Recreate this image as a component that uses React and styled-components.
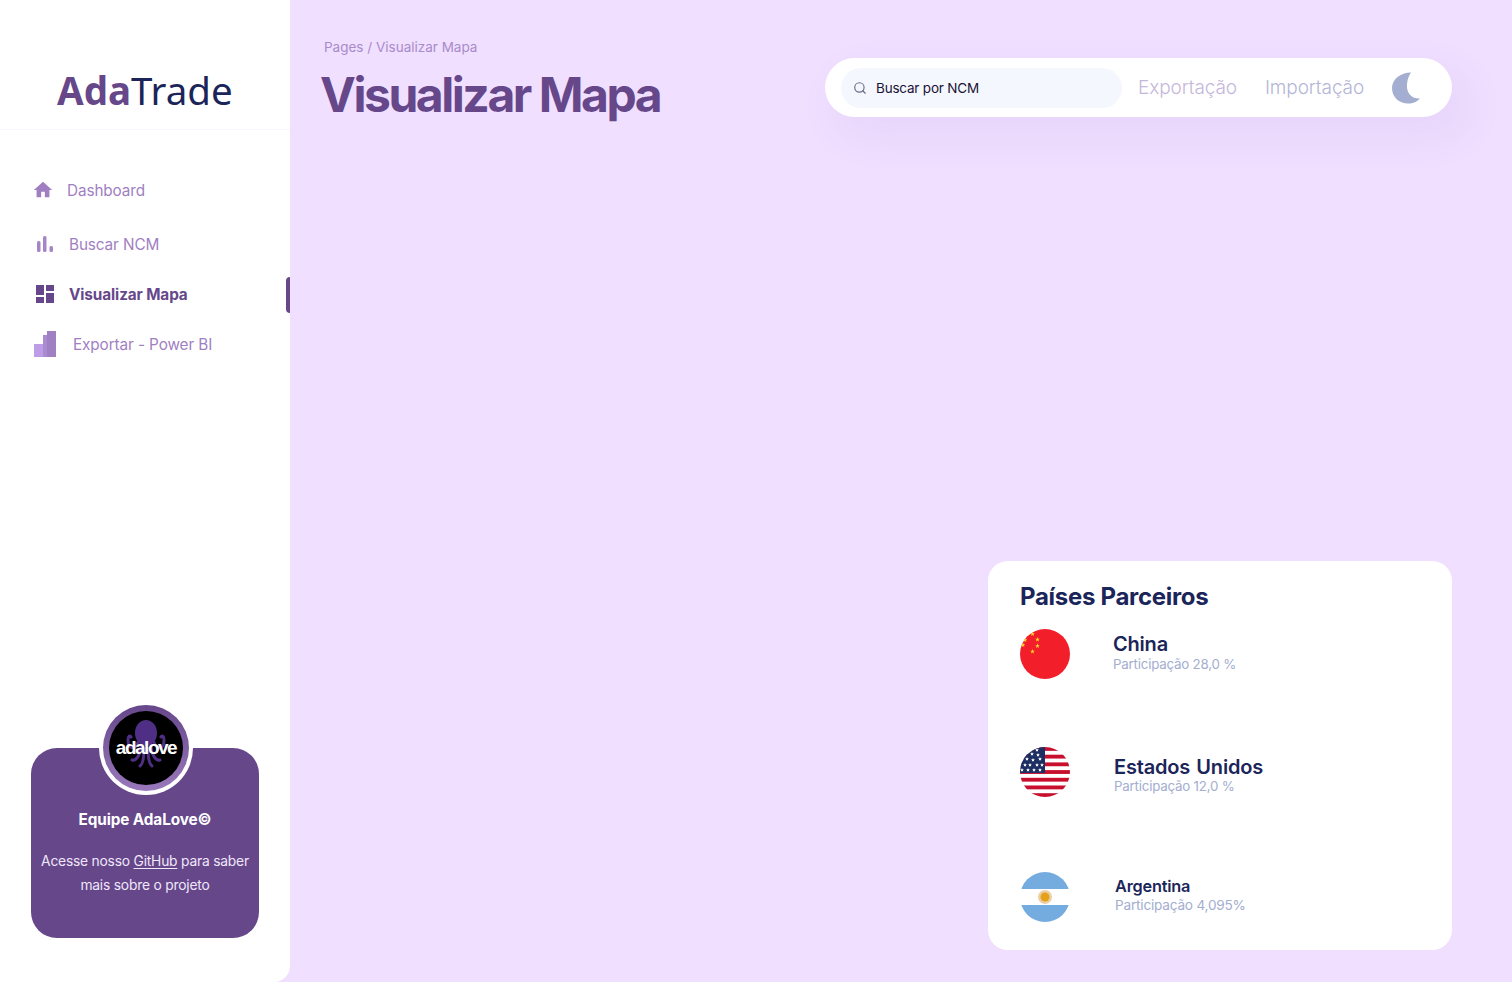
import styled, { createGlobalStyle } from "styled-components"
import { MdHome, MdDashboard } from "react-icons/md"
import { Search } from "lucide-react"

const GlobalStyle = createGlobalStyle`
html, body {
  margin: 0;
  padding: 0;
  height: 100%;
  background: #F0DFFF;
}
* {
  box-sizing: border-box;
}
`

const Page = styled.div`
width: 1512px;
height: 982px;
display: flex;
overflow: hidden;
font-family: Inter, "Liberation Sans", sans-serif;
background: #F0DFFF;
`

const Sidebar = styled.aside`
width: 290px;
height: 100%;
flex-shrink: 0;
background: #fff;
border-bottom-right-radius: 16px;
display: flex;
flex-direction: column;
`
const LogoBox = styled.div`
height: 130px;
flex-shrink: 0;
padding: 63px 0 0 57px;
border-bottom: 1px solid #F4F7FE;
font-family: "Noto Sans", sans-serif;
font-size: 38.5px;
line-height: 54px;
color: #1B2559;
font-weight: 400;
`
const LogoBold = styled.span`
font-weight: 700;
color: #65478A;
`
const Nav = styled.nav`
margin-top: 42px;
display: flex;
flex-direction: column;
gap: 14px;
`
const NavRow = styled.a`
position: relative;
height: 36px;
display: flex;
align-items: center;
gap: ${p => p.$gap}px;
padding-left: ${p => p.$left}px;
margin-bottom: ${p => p.$after || 0}px;
font-size: 15.3px;
letter-spacing: -0.1px;
font-weight: ${p => p.$active ? 700 : 400};
color: ${p => p.$active ? "#65478A" : "#9F7FC2"};
`
const ActiveBar = styled.span`
position: absolute;
right: 0;
top: 1px;
width: 4px;
height: 36px;
border-radius: 4px 0 0 4px;
background: #65478A;
`
const TeamCard = styled.div`
position: relative;
margin: auto 31px 44px;
height: 190px;
border-radius: 26px;
background: #65478A;
padding-top: 62px;
text-align: center;
color: #fff;
`
const Avatar = styled.div`
position: absolute;
left: 68px;
top: -47px;
width: 94px;
height: 94px;
border-radius: 50%;
background: #fff;
display: flex;
align-items: center;
justify-content: center;
`
const AvatarRing = styled.div`
width: 86px;
height: 86px;
border-radius: 50%;
background: linear-gradient(180deg, #65478A 0%, #9A78BC 100%);
display: flex;
align-items: center;
justify-content: center;
`
const AvatarInner = styled.div`
position: relative;
width: 74px;
height: 74px;
border-radius: 50%;
background: #000;
display: flex;
align-items: center;
justify-content: center;
overflow: hidden;
`
const OctopusIcon = styled.svg`
position: absolute;
left: 15px;
top: 9px;
`
const AvatarText = styled.span`
position: relative;
font-family: "Liberation Sans", sans-serif;
font-size: 19px;
font-weight: 700;
letter-spacing: -1.5px;
color: #fff;
margin-top: -1px;
`
const TeamName = styled.div`
font-size: 15.3px;
font-weight: 700;
line-height: 20px;
letter-spacing: -0.1px;
`
const TeamText = styled.p`
margin: 19px 0 0;
font-size: 13.8px;
line-height: 24px;
letter-spacing: -0.2px;
color: #F0E6FA;
`
const TeamLink = styled.span`
text-decoration: underline;
text-underline-offset: 2px;
`

const Main = styled.main`
flex: 1;
display: flex;
flex-direction: column;
padding: 39px 60px 32px 30px;
`
const Header = styled.header`
display: flex;
justify-content: space-between;
align-items: flex-start;
`
const Crumb = styled.div`
padding-left: 4px;
font-size: 13.5px;
line-height: 16px;
color: #A88BC9;
`
const Title = styled.h1`
margin: 8px 0 0;
font-size: 48px;
line-height: 64px;
font-weight: 700;
letter-spacing: -2.45px;
color: #65478A;
`
const TopBar = styled.div`
margin-top: 19px;
width: 627px;
height: 59px;
border-radius: 30px;
background: #fff;
box-shadow: 14px 17px 40px 4px rgba(130, 90, 200, 0.07);
display: flex;
align-items: center;
padding-left: 16px;
`
const SearchBox = styled.div`
width: 281px;
height: 40px;
border-radius: 20px;
background: #F4F7FE;
display: flex;
align-items: center;
gap: 9px;
padding-left: 12px;
font-size: 13.5px;
letter-spacing: -0.2px;
color: #1B1235;
`
const TopLink = styled.span`
margin-left: ${p => p.$left}px;
font-size: 19px;
font-weight: 300;
letter-spacing: -0.1px;
color: ${p => p.$color};
`
const MoonIcon = styled.svg`
margin-left: 28px;
`

const Card = styled.section`
margin-top: auto;
align-self: flex-end;
width: 464px;
height: 389px;
border-radius: 20px;
background: #fff;
padding: 18px 32px 0;
`
const CardTitle = styled.h2`
margin: 0 0 14px;
font-size: 24px;
line-height: 36px;
font-weight: 700;
letter-spacing: -0.3px;
color: #1B2559;
`
const Partner = styled.div`
display: flex;
align-items: flex-start;
gap: ${p => p.$gap}px;
height: ${p => p.$height}px;
`
const Flag = styled.svg`
display: block;
flex-shrink: 0;
border-radius: 50%;
`
const PartnerInfo = styled.div`
padding-top: ${p => p.$top}px;
`
const PartnerName = styled.div`
font-size: ${p => p.$size}px;
line-height: 24px;
font-weight: 600;
letter-spacing: -0.2px;
word-spacing: ${p => p.$spacing || 0}px;
color: #1B2559;
`
const PartnerShare = styled.div`
font-size: ${p => p.$size || 13.3}px;
line-height: 16px;
letter-spacing: -0.2px;
color: #A3AED0;
margin-top: ${p => p.$top || 0}px;
`

const BarsIcon = () => (
  <svg width="16" height="16" viewBox="0 0 16 16">
    <rect x="0" y="5" width="3.5" height="11" rx="1.5" fill="#A585C8" />
    <rect x="6" y="0" width="3.5" height="16" rx="1.5" fill="#A585C8" />
    <rect x="12.5" y="10" width="3.5" height="6" rx="1.5" fill="#A585C8" />
  </svg>
)

const ExportIcon = () => (
  <svg width="22" height="26" viewBox="0 0 22 26">
    <rect x="0" y="13" width="9" height="13" fill="#BE9DE8" />
    <rect x="9" y="4" width="4" height="22" fill="#A98BCF" />
    <rect x="13" y="0" width="9" height="26" fill="#9F80C2" />
  </svg>
)

const Octopus = () => (
  <OctopusIcon width="44" height="52" viewBox="0 0 44 52">
    <ellipse cx="22" cy="13" rx="11" ry="13" fill="#4F2F85" />
    <path d="M14 22C12 30 4 30 4 20C4 16 6 15 7 17M30 22C32 30 40 30 40 20C40 16 38 15 37 17M17 26C16 36 12 41 8 40M27 26C28 36 32 41 36 40M20 28C20 38 19 44 16 46M24 28C24 38 25 44 28 46"
      fill="none" stroke="#4F2F85" strokeWidth="3" strokeLinecap="round" />
  </OctopusIcon>
)

const starPoints = (x, y, r) => {
  const pts = []
  for (let i = 0; i < 10; i++) {
    const a = -Math.PI / 2 + (i * Math.PI) / 5
    const d = i % 2 ? r * 0.45 : r
    pts.push(`${x + d * Math.cos(a)},${y + d * Math.sin(a)}`)
  }
  return pts.join(" ")
}

const chinaStars = [[12.5, 5], [5, 11], [3, 16], [17.5, 10.5], [17.5, 17], [12.5, 22.5]]

const ChinaFlag = () => (
  <Flag width="50" height="50" viewBox="0 0 50 50">
    <rect width="50" height="50" fill="#F21F2B" />
    {chinaStars.map(([x, y]) => (
      <polygon key={x + "-" + y} points={starPoints(x, y, 2.4)} fill="#FFD52B" />
    ))}
  </Flag>
)

const usStars = [
  [17, 3], [12, 7], [18, 8], [7, 12], [13, 13], [20, 12], [5, 18], [10, 18], [17, 18], [22, 18], [2, 23], [8, 23], [14, 23], [20, 23],
]

const UsaFlag = () => (
  <Flag width="50" height="50" viewBox="0 0 50 50">
    <rect width="50" height="50" fill="#fff" />
    {[0, 1, 2, 3, 4, 5, 6].map(i => (
      <rect key={i} x="0" y={i * 7.7} width="50" height="3.85" fill="#C8102E" />
    ))}
    <rect width="25" height="26" fill="#1D2E63" />
    {usStars.map(([x, y]) => (
      <polygon key={x + "-" + y} points={starPoints(x, y, 2)} fill="#fff" />
    ))}
  </Flag>
)

const ArgentinaFlag = () => (
  <Flag width="50" height="50" viewBox="0 0 50 50">
    <rect width="50" height="50" fill="#fff" />
    <rect width="50" height="17" fill="#74ACDF" />
    <rect y="33" width="50" height="17" fill="#74ACDF" />
    <circle cx="25" cy="25" r="7" fill="#EBCFA6" />
    <circle cx="25" cy="25" r="4.5" fill="#E6A11B" />
  </Flag>
)

const App = () => {
  return (
    <Page>
      <GlobalStyle />
      <Sidebar>
        <LogoBox><LogoBold>Ada</LogoBold>Trade</LogoBox>
        <Nav>
          <NavRow $left={32} $gap={13} $after={4}>
            <MdHome size={22} />
            Dashboard
          </NavRow>
          <NavRow $left={37} $gap={16}>
            <BarsIcon />
            Buscar NCM
          </NavRow>
          <NavRow $left={33} $gap={12} $active>
            <MdDashboard size={24} />
            Visualizar Mapa
            <ActiveBar />
          </NavRow>
          <NavRow $left={34} $gap={17}>
            <ExportIcon />
            Exportar - Power BI
          </NavRow>
        </Nav>
        <TeamCard>
          <Avatar>
            <AvatarRing>
              <AvatarInner>
                <Octopus />
                <AvatarText>adalove</AvatarText>
              </AvatarInner>
            </AvatarRing>
          </Avatar>
          <TeamName>Equipe AdaLove©</TeamName>
          <TeamText>
            Acesse nosso <TeamLink>GitHub</TeamLink> para saber<br />
            mais sobre o projeto
          </TeamText>
        </TeamCard>
      </Sidebar>
      <Main>
        <Header>
          <div>
            <Crumb>Pages / Visualizar Mapa</Crumb>
            <Title>Visualizar Mapa</Title>
          </div>
          <TopBar>
            <SearchBox>
              <Search size={14} color="#6B6B80" />
              Buscar por NCM
            </SearchBox>
            <TopLink $left={16} $color="#C5B7D9">Exportação</TopLink>
            <TopLink $left={28} $color="#B4B6D6">Importação</TopLink>
            <MoonIcon width="28" height="32" viewBox="0 0 28 32">
              <path d="M19 0.5C8.5 0.5 0 7.5 0 16C0 25 7 31.5 16 31.5C21 31.5 25.5 29.5 28 26.5C20.5 27 15.5 22 15 15.5C14.7 9.5 16.5 4 19 0.5Z" fill="#A3AED0" />
            </MoonIcon>
          </TopBar>
        </Header>
        <Card>
          <CardTitle>Países Parceiros</CardTitle>
          <Partner $gap={43} $height={118}>
            <ChinaFlag />
            <PartnerInfo $top={3}>
              <PartnerName $size={20}>China</PartnerName>
              <PartnerShare>Participação 28,0 %</PartnerShare>
            </PartnerInfo>
          </Partner>
          <Partner $gap={44} $height={125}>
            <UsaFlag />
            <PartnerInfo $top={8}>
              <PartnerName $size={20} $spacing={1.5}>Estados Unidos</PartnerName>
              <PartnerShare $top={-1}>Participação 12,0 %</PartnerShare>
            </PartnerInfo>
          </Partner>
          <Partner $gap={45} $height={50}>
            <ArgentinaFlag />
            <PartnerInfo $top={2}>
              <PartnerName $size={16.3}>Argentina</PartnerName>
              <PartnerShare $size={13.6} $top={-1}>Participação 4,095%</PartnerShare>
            </PartnerInfo>
          </Partner>
        </Card>
      </Main>
    </Page>
  )
}

export default App
